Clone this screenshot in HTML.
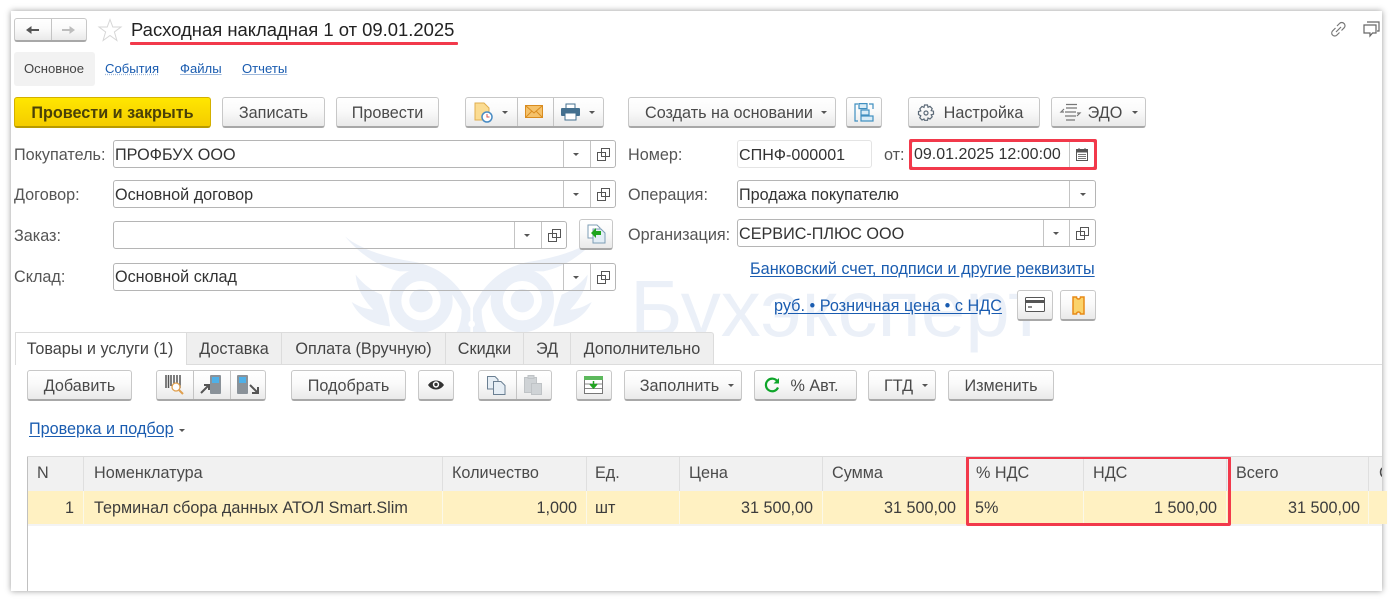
<!DOCTYPE html>
<html lang="ru"><head><meta charset="utf-8"><title>Расходная накладная</title>
<style>
html,body{margin:0;padding:0;background:#fff;width:1393px;height:602px;overflow:hidden}
body{font-family:"Liberation Sans",Arial,sans-serif;font-size:16.2px;color:#4a4a4a;position:relative}
#w{position:absolute;left:0;top:0;width:1393px;height:602px;filter:blur(.3px)}
#card{position:absolute;left:11px;top:11px;width:1371px;height:580px;background:#fff;box-shadow:0 0 6px rgba(0,0,0,.4)}
.a{position:absolute;box-sizing:border-box}
.t{position:absolute;white-space:nowrap;line-height:20px;height:20px;margin-top:1px}
.b{position:absolute;box-sizing:border-box;height:31px;top:97px;border:1px solid #c8c8c8;border-bottom:2px solid #a8a8a8;border-radius:3px;background:linear-gradient(#fff 0%,#fafafa 45%,#e9e9e9 100%);text-align:center;line-height:30px;white-space:nowrap;color:#4a4a4a}
.i{position:absolute;box-sizing:border-box;height:28px;border:1px solid #b5b5b5;border-radius:3px;background:transparent;line-height:28px;padding-left:1px;color:#333;white-space:nowrap}
.d{position:absolute;top:0;bottom:0;width:1px;background:#c4c4c4}
.c{position:absolute;width:0;height:0;border-left:3px solid transparent;border-right:3px solid transparent;border-top:3.5px solid #555}
.l{color:#1a5cb0;text-decoration:underline;text-underline-offset:2px}
.tab{position:absolute;box-sizing:border-box;top:332px;height:32px;background:#efefef;border:1px solid #dcdcdc;border-bottom:none;text-align:center;line-height:32px;white-space:nowrap;color:#444}
.h{position:absolute;top:456px;height:35px;box-sizing:border-box;border-right:1px solid #dfdfdf;line-height:33px;padding-left:9px;background:#f1f1f1;white-space:nowrap;padding-top:1px}
.r{position:absolute;top:491px;height:33px;box-sizing:border-box;border-right:1px solid #fbf8e8;line-height:33px;background:#fff1c2;color:#3c3c3c;white-space:nowrap;padding:1px 9px 0}
.rt{text-align:right}
.red{position:absolute;box-sizing:border-box;border:3px solid #f2394b;border-radius:2px;pointer-events:none}
svg{position:absolute;overflow:visible}
</style></head><body>
<div id="w">
<div id="card"></div>

<!-- watermark -->
<svg style="left:345px;top:228px" width="255" height="108" viewBox="0 0 765 324">
<g fill="#ebf0f8">
<path d="M0 25C40 60 120 88 200 100C280 112 345 165 376 240V320H330C345 300 350 270 350 245C320 190 280 145 240 132C215 128 190 130 165 130C110 120 50 85 0 25Z"/>
<path d="M32 140C60 175 85 190 110 200L130 260L135 295C80 290 40 265 20 222C40 235 60 243 85 245C55 215 35 180 32 140Z"/>
<circle cx="228" cy="218" r="77" fill="none" stroke="#ebf0f8" stroke-width="36"/>
<circle cx="228" cy="218" r="35"/>
</g>
<g fill="#ebf0f8" transform="translate(760 0) scale(-1 1)">
<path d="M0 25C40 60 120 88 200 100C280 112 345 165 376 240V320H330C345 300 350 270 350 245C320 190 280 145 240 132C215 128 190 130 165 130C110 120 50 85 0 25Z"/>
<path d="M32 140C60 175 85 190 110 200L130 260L135 295C80 290 40 265 20 222C40 235 60 243 85 245C55 215 35 180 32 140Z"/>
<circle cx="228" cy="218" r="77" fill="none" stroke="#ebf0f8" stroke-width="36"/>
<circle cx="228" cy="218" r="35"/>
</g>
<circle cx="380" cy="288" r="10" fill="#fff"/>
</svg>
<div class="t" style="left:630px;top:269px;margin-top:0;font-size:80px;line-height:80px;height:80px;color:#ebf0f8">Бухэксперт</div>

<!-- header -->
<div class="b" style="left:14px;top:18px;width:73px;height:24px"><div class="d" style="left:36px"></div></div>
<svg style="left:26px;top:25px" width="14" height="10"><path d="M0 5L5.500 1V4H13V6H5.500V9Z" fill="#555"/></svg>
<svg style="left:61px;top:25px" width="14" height="10"><path d="M14 5L8.500 1V4H1V6H8.500V9Z" fill="#bdbdbd"/></svg>
<svg style="left:98px;top:18px" width="24" height="24"><path d="M12 1.500L14.800 9H23L16.400 14L18.900 22.500L12 17.500L5.100 22.500L7.600 14L1 9H9.200Z" fill="#fff" stroke="#d6d6d6"/></svg>
<div class="t" style="left:131px;top:19px;font-size:18.450px;color:#222">Расходная накладная 1 от 09.01.2025</div>
<div class="a" style="left:130px;top:42px;width:328px;height:2.500px;background:#f2394b;border-radius:1px"></div>
<svg style="left:1330px;top:21px" width="17" height="17" fill="none" stroke="#777" stroke-width="1.200"><path d="M7 5L9.500 2.500a3 3 0 0 1 4.500 0a3 3 0 0 1 0 4.500L11.500 9.500M5.500 7L2.500 10a3 3 0 0 0 0 4a3 3 0 0 0 4.500 0L9.500 11.500M6 11L11 6"/></svg>
<svg style="left:1363px;top:21px" width="17" height="17" fill="#fff" stroke="#666" stroke-width="1.200"><path d="M4 1H16V10H14"/><path d="M1 4H13V12H9.500L7 15V12H1Z"/></svg>

<div class="a" style="left:14px;top:52px;width:81px;height:34px;background:#f2f2f2;border-radius:3px"></div>
<div class="t" style="left:24px;top:58px;font-size:13.100px;color:#444">Основное</div>
<div class="t" style="left:105px;top:58px;font-size:13.100px;color:#1a5cb0;text-decoration:underline dotted #9db8dc">События</div>
<div class="t" style="left:180px;top:58px;font-size:13.100px;color:#1a5cb0;text-decoration:underline #9db8dc">Файлы</div>
<div class="t" style="left:242px;top:58px;font-size:13.100px;color:#1a5cb0;text-decoration:underline #9db8dc">Отчеты</div>

<!-- command bar -->
<div class="b" style="left:14px;width:197px;background:linear-gradient(#ffe600,#f4cc00);border:1px solid #d3b000;border-bottom:2px solid #b89a00;font-weight:bold;color:#4a4108">Провести и закрыть</div>
<div class="b" style="left:222px;width:103px">Записать</div>
<div class="b" style="left:336px;width:103px">Провести</div>
<div class="b" style="left:465px;width:139px"><div class="d" style="left:51px"></div><div class="d" style="left:87px"></div><div class="c" style="left:36px;top:13px"></div><div class="c" style="left:123px;top:13px"></div></div>
<svg style="left:474px;top:102px" width="20" height="21"><path d="M1 1H10L15 6V18H1Z" fill="#fbdc92" stroke="#e0ae4e"/><circle cx="13" cy="15" r="5" fill="#fff" stroke="#4a8cc4" stroke-width="1.500"/><path d="M13 12v3h2.500" stroke="#d9534f" fill="none"/></svg>
<svg style="left:525px;top:105px" width="18" height="14"><rect x=".5" y=".5" width="17" height="12" fill="#f5c26b" stroke="#d98c20"/><path d="M1 1L9 8L17 1M1 12L7 6M17 12L11 6" fill="none" stroke="#d98c20"/></svg>
<svg style="left:561px;top:104px" width="19" height="17"><rect x="5" y="0" width="9" height="5" fill="#fff" stroke="#44708f"/><rect x="0" y="4" width="19" height="8" rx="1" fill="#44708f"/><rect x="4" y="9" width="11" height="7" fill="#fff" stroke="#44708f"/></svg>

<div class="b" style="left:628px;width:208px;padding-right:6px">Создать на основании<div class="c" style="left:192px;top:13px"></div></div>
<div class="b" style="left:846px;width:36px"></div>
<svg style="left:854px;top:103px" width="20" height="19" fill="#d8ecf7" stroke="#3f8fc0" stroke-width="1.200"><rect x="5" y=".6" width="8" height="5"/><rect x="7" y="7" width="8" height="5"/><rect x="7" y="13" width="12" height="5"/><path d="M4 1H1V18H4M15 1H19V6" fill="none"/></svg>
<div class="b" style="left:908px;width:132px;padding-left:19px">Настройка</div>
<svg style="left:917px;top:104px" width="18" height="18" fill="none" stroke="#5c6a78" stroke-width="1.200"><circle cx="9" cy="9" r="2"/><path d="M7.500 1h3l.5 2.300 2-.9 2.200 2.200-1 2 2.300.6v3l-2.300.6 1 2-2.200 2.200-2-1-.5 2.300h-3L7 15l-2 1-2.200-2.200 1-2L1.500 10.500v-3L3.800 6.900l-1-2L5 2.500l2 .9z"/></svg>
<div class="b" style="left:1051px;width:95px;padding-left:14px;text-indent:-1px">ЭДО<div class="c" style="left:80px;top:13px"></div></div>
<svg style="left:1060px;top:103px" width="21" height="19" fill="none" stroke="#777" stroke-width="1.200"><path d="M6 1.500H17M6 5H17M5 9H16M5 13H16M6 17H15"/><path d="M4 6L1 9H4M17 13L20 10H17"/></svg>

<!-- left fields -->
<div class="t" style="left:14px;top:144px;color:#555">Покупатель:</div>
<div class="t" style="left:14px;top:184px;color:#555">Договор:</div>
<div class="t" style="left:14px;top:225px;color:#555">Заказ:</div>
<div class="t" style="left:14px;top:266px;color:#555">Склад:</div>

<div class="i" style="left:113px;top:140px;width:503px">ПРОФБУХ ООО<div class="d" style="left:449px"></div><div class="d" style="left:476px"></div><div class="c" style="left:459px;top:12px"></div></div>
<svg style="left:597px;top:148px" width="13" height="13" fill="#fff" stroke="#555"><rect x="4.500" y=".5" width="8" height="8"/><rect x=".5" y="4.500" width="8" height="8" fill="none"/></svg>
<div class="i" style="left:113px;top:180px;width:503px">Основной договор<div class="d" style="left:449px"></div><div class="d" style="left:476px"></div><div class="c" style="left:459px;top:12px"></div></div>
<svg style="left:597px;top:188px" width="13" height="13" fill="#fff" stroke="#555"><rect x="4.500" y=".5" width="8" height="8"/><rect x=".5" y="4.500" width="8" height="8" fill="none"/></svg>
<div class="i" style="left:113px;top:221px;width:454px"><div class="d" style="left:400px"></div><div class="d" style="left:427px"></div><div class="c" style="left:410px;top:12px"></div></div>
<svg style="left:548px;top:229px" width="13" height="13" fill="#fff" stroke="#555"><rect x="4.500" y=".5" width="8" height="8"/><rect x=".5" y="4.500" width="8" height="8" fill="none"/></svg>
<div class="b" style="left:579px;top:219px;width:34px;height:31px"></div>
<svg style="left:587px;top:224px" width="19" height="20"><path d="M1 1H10L13 4V14H1Z" fill="#fff" stroke="#7d9db5"/><path d="M6 5H14L18 9V19H6Z" fill="#e3eef6" stroke="#7d9db5"/><path d="M4 9L9 4V7H14V11H9V14Z" fill="#1ea51e"/></svg>
<div class="i" style="left:113px;top:263px;width:503px;line-height:26px">Основной склад<div class="d" style="left:449px"></div><div class="d" style="left:476px"></div><div class="c" style="left:459px;top:12px"></div></div>
<svg style="left:597px;top:271px" width="13" height="13" fill="#fff" stroke="#555"><rect x="4.500" y=".5" width="8" height="8"/><rect x=".5" y="4.500" width="8" height="8" fill="none"/></svg>

<!-- right fields -->
<div class="t" style="left:628px;top:144px;color:#555">Номер:</div>
<div class="i" style="left:737px;top:140px;width:135px;border-color:#e4e4e4;font-size:16.100px">СПНФ-000001</div>
<div class="t" style="left:884px;top:144px;color:#555">от:</div>
<div class="i" style="left:911px;top:141px;width:184px;height:27px;line-height:26px;padding-left:2px;font-size:16px">09.01.2025 12:00:00<div class="d" style="left:157px"></div></div>
<svg style="left:1076px;top:148px" width="12" height="13"><rect x=".5" y="1.500" width="11" height="11" fill="#fff" stroke="#555"/><rect x="0" y="1" width="12" height="3.500" fill="#555"/><path d="M3 0v2M9 0v2" stroke="#555"/><path d="M2 6.500H10M2 8.500H10M2 10.500H10" stroke="#777"/></svg>
<div class="red" style="left:909px;top:139px;width:188px;height:31px"></div>

<div class="t" style="left:628px;top:184px;color:#555">Операция:</div>
<div class="i" style="left:737px;top:180px;width:359px">Продажа покупателю<div class="d" style="left:331px"></div><div class="c" style="left:342px;top:12px"></div></div>
<div class="t" style="left:628px;top:224px;color:#555">Организация:</div>
<div class="i" style="left:737px;top:219px;width:359px">СЕРВИС-ПЛЮС ООО<div class="d" style="left:305px"></div><div class="d" style="left:331px"></div><div class="c" style="left:315px;top:12px"></div></div>
<svg style="left:1076px;top:227px" width="13" height="13" fill="#fff" stroke="#555"><rect x="4.500" y=".5" width="8" height="8"/><rect x=".5" y="4.500" width="8" height="8" fill="none"/></svg>
<div class="t l" style="left:750px;top:258px;font-size:16.250px">Банковский счет, подписи и другие реквизиты</div>
<div class="t l" style="left:774px;top:295px;font-size:16.250px">руб. • Розничная цена • с НДС</div>
<div class="b" style="left:1017px;top:290px;width:36px"></div>
<svg style="left:1025px;top:297px" width="20" height="15"><rect x=".5" y=".5" width="19" height="14" rx="1" fill="#fff" stroke="#555"/><rect x="1" y="3" width="18" height="3" fill="#555"/><path d="M3 10H7" stroke="#888" stroke-width="2"/></svg>
<div class="b" style="left:1060px;top:290px;width:36px"></div>
<svg style="left:1072px;top:296px" width="13" height="19"><path d="M1 1H4.500A2 2 0 0 0 8.500 1H12V18H8.500A2 2 0 0 0 4.500 18H1Z" fill="#fbd36b" stroke="#e88a17" stroke-width="1.500"/></svg>

<!-- tabs -->
<div class="a" style="left:186px;top:364px;width:1196px;height:1px;background:#dcdcdc"></div>
<div class="tab" style="left:15px;width:172px;background:#fff;height:33px;color:#444;padding-right:2px">Товары и услуги (1)</div>
<div class="tab" style="left:186px;width:96px">Доставка</div>
<div class="tab" style="left:281px;width:165px">Оплата (Вручную)</div>
<div class="tab" style="left:445px;width:79px">Скидки</div>
<div class="tab" style="left:523px;width:48px">ЭД</div>
<div class="tab" style="left:570px;width:144px;border-radius:0 3px 0 0">Дополнительно</div>

<!-- toolbar -->
<div class="b" style="left:27px;top:370px;width:105px">Добавить</div>
<div class="b" style="left:156px;top:370px;width:110px"><div class="d" style="left:36px"></div><div class="d" style="left:73px"></div></div>
<svg style="left:165px;top:375px" width="20" height="20"><path d="M1 0v13M3.500 0v13M6 0v11M9 0v9M12 0v9M15 0v13" stroke="#555" stroke-width="1.500"/><circle cx="11" cy="12" r="4" fill="#fff" stroke="#e0a050" stroke-width="1.300"/><path d="M14 15l4 4" stroke="#e0a050" stroke-width="2"/></svg>
<svg style="left:201px;top:375px" width="21" height="20"><rect x="9" y="0" width="11" height="19" rx="1" fill="#8a9299"/><rect x="11" y="2" width="7" height="6" fill="#4fb0e8"/><path d="M0 18L7 11M3 10H8V15" fill="none" stroke="#555" stroke-width="2"/></svg>
<svg style="left:237px;top:375px" width="22" height="20"><rect x="0" y="0" width="11" height="19" rx="1" fill="#8a9299"/><rect x="2" y="2" width="7" height="6" fill="#4fb0e8"/><path d="M13 10L20 17M15 18H21V12" fill="none" stroke="#555" stroke-width="2"/></svg>
<div class="b" style="left:291px;top:370px;width:115px">Подобрать</div>
<div class="b" style="left:418px;top:370px;width:36px"></div>
<svg style="left:428px;top:380px" width="16" height="10"><path d="M0 5C4 -1 12 -1 16 5C12 11 4 11 0 5Z" fill="#333"/><circle cx="8" cy="4.500" r="3.200" fill="#fff"/><circle cx="8" cy="4.500" r="1.700" fill="#333"/></svg>
<div class="b" style="left:478px;top:370px;width:74px"><div class="d" style="left:37px"></div></div>
<svg style="left:487px;top:376px" width="20" height="19" fill="#e6eef5" stroke="#6a7f92"><path d="M.5.5H8L11 3.500V13H.5Z"/><path d="M6.500 5.500H14L18 9.500V18.500H6.500Z"/></svg>
<svg style="left:524px;top:375px" width="19" height="20" fill="#cfd3d6" stroke="#bfc3c6"><rect x=".5" y="2.500" width="12" height="15"/><rect x="7.500" y="8.500" width="10" height="11"/><rect x="4" y=".5" width="6" height="3"/></svg>
<div class="b" style="left:576px;top:370px;width:36px"></div>
<svg style="left:584px;top:376px" width="19" height="18"><rect x=".5" y=".5" width="18" height="17" fill="#fff" stroke="#777"/><rect x="0" y="0" width="19" height="4" fill="#5cb85c"/><path d="M1 8H18M1 12.500H18" stroke="#888"/><path d="M9.500 5V11M6 8L9.500 12L13 8" fill="#22a322" stroke="#22a322" stroke-width="1.500"/></svg>
<div class="b" style="left:624px;top:370px;width:118px;padding-right:7px">Заполнить<div class="c" style="left:103px;top:13px"></div></div>
<div class="b" style="left:754px;top:370px;width:103px;padding-left:18px">% Авт.</div>
<svg style="left:764px;top:377px" width="16" height="17" fill="none" stroke="#0ea52a" stroke-width="2.200"><path d="M13.500 4.500A6.300 6.300 0 1 0 14 10.500"/><path d="M15 1V6.500H9.500Z" stroke="none" fill="#0ea52a"/></svg>
<div class="b" style="left:868px;top:370px;width:68px;padding-right:7px">ГТД<div class="c" style="left:53px;top:13px"></div></div>
<div class="b" style="left:948px;top:370px;width:106px">Изменить</div>

<div class="t l" style="left:29px;top:418px">Проверка и подбор</div>
<div class="c" style="left:179px;top:429px"></div>

<!-- table -->
<div class="a" style="left:27px;top:456px;width:1px;height:135px;background:#c0c0c0"></div>
<div class="a" style="left:27px;top:456px;width:1355px;height:1px;background:#dcdcdc;z-index:2"></div>
<div class="h" style="left:28px;width:56px">N</div>
<div class="h" style="left:84px;width:359px;padding-left:10px">Номенклатура</div>
<div class="h" style="left:443px;width:144px">Количество</div>
<div class="h" style="left:587px;width:93px;padding-left:8px">Ед.</div>
<div class="h" style="left:680px;width:143px">Цена</div>
<div class="h" style="left:823px;width:144px">Сумма</div>
<div class="h" style="left:967px;width:117px">% НДС</div>
<div class="h" style="left:1084px;width:143px">НДС</div>
<div class="h" style="left:1227px;width:142px">Всего</div>
<div class="h" style="left:1369px;width:13px;border-right:none;overflow:hidden;padding-left:10px">С</div>

<div class="r rt" style="left:28px;width:56px">1</div>
<div class="r" style="left:84px;width:359px;padding-left:10px">Терминал сбора данных АТОЛ Smart.Slim</div>
<div class="r rt" style="left:443px;width:144px">1,000</div>
<div class="r" style="left:587px;width:93px;padding-left:8px">шт</div>
<div class="r rt" style="left:680px;width:143px">31 500,00</div>
<div class="r rt" style="left:823px;width:144px;padding-right:10px">31 500,00</div>
<div class="r" style="left:967px;width:117px;padding-left:8px">5%</div>
<div class="r rt" style="left:1084px;width:143px">1 500,00</div>
<div class="r rt" style="left:1227px;width:142px;padding-right:8px">31 500,00</div>
<div class="r" style="left:1369px;width:13px;border-right:none"></div>
<div class="a" style="left:28px;top:524px;width:1354px;height:2px;background:#f3f3f3"></div>
<div class="red" style="left:966px;top:456px;width:265px;height:70px"></div>
</div>
</body></html>
